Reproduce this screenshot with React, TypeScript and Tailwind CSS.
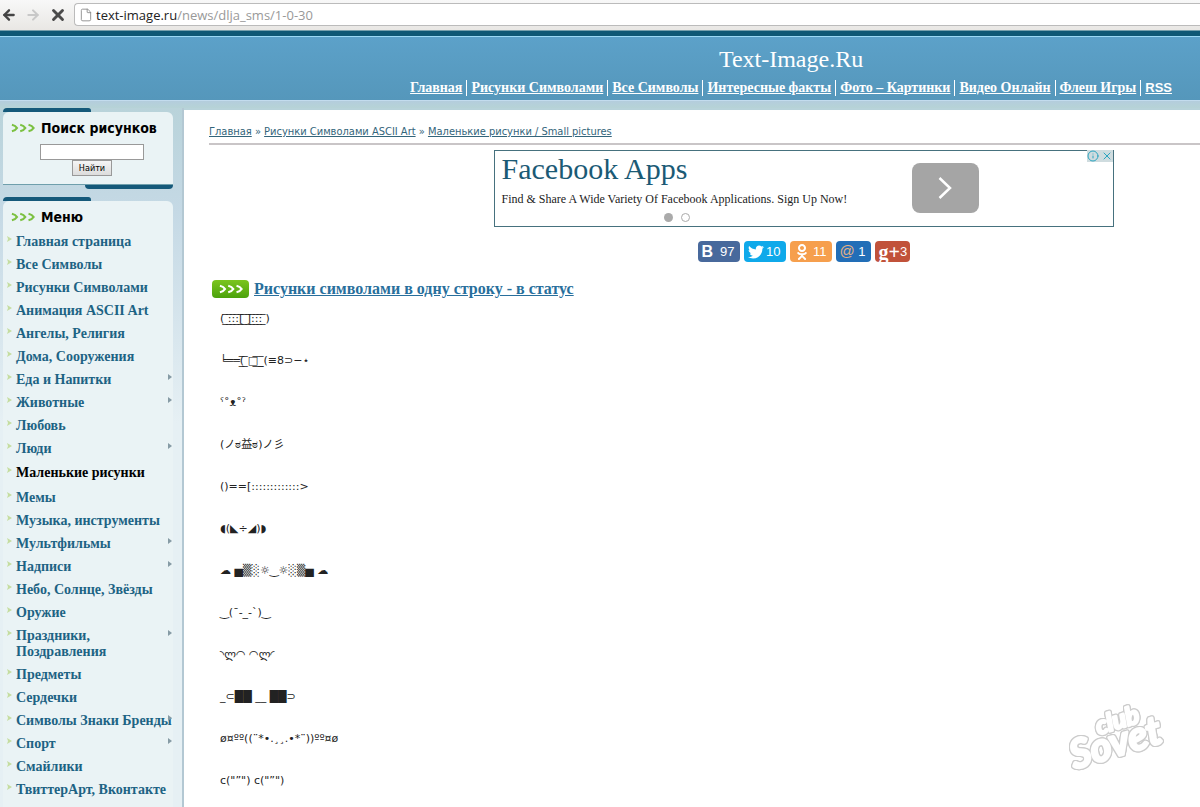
import { ArrowLeft, ArrowRight, File, Info, X } from "lucide-react";
import { FaOdnoklassniki, FaTwitter } from "react-icons/fa";

const SERIF = "font-['Liberation_Serif',serif]";

const topLinks = [
  "Главная",
  "Рисунки Символами",
  "Все Символы",
  "Интересные факты",
  "Фото – Картинки",
  "Видео Онлайн",
  "Флеш Игры",
];

type MenuItem = { label: string; sub?: boolean; current?: boolean };

const menu: MenuItem[] = [
  { label: "Главная страница" },
  { label: "Все Символы" },
  { label: "Рисунки Символами" },
  { label: "Анимация ASCII Art" },
  { label: "Ангелы, Религия" },
  { label: "Дома, Сооружения" },
  { label: "Еда и Напитки", sub: true },
  { label: "Животные", sub: true },
  { label: "Любовь" },
  { label: "Люди", sub: true },
  { label: "Маленькие рисунки", current: true },
  { label: "Мемы" },
  { label: "Музыка, инструменты" },
  { label: "Мультфильмы", sub: true },
  { label: "Надписи", sub: true },
  { label: "Небо, Солнце, Звёзды" },
  { label: "Оружие" },
  { label: "Праздники, Поздравления", sub: true },
  { label: "Предметы" },
  { label: "Сердечки" },
  { label: "Символы Знаки Бренды", sub: true },
  { label: "Спорт", sub: true },
  { label: "Смайлики" },
  { label: "ТвиттерАрт, Вконтакте" },
];

const pictures = [
  "( ̲̅:̲̅:̲̅:̲̅[̲̅ ̲̅]̲̅:̲̅:̲̅:̲̅ ̲̅)",
  "╘══(̲̅ ̲̅□̲̅_̲̅(≡8⊃−⋆",
  "ˁ˚ᴥ˚ˀ",
  "(ノಠ益ಠ)ノ彡",
  "()==[:::::::::::::>",
  "◖(◣÷◢)◗",
  "☁ ▅▒░☼‿☼░▒▅ ☁",
  "‿(¯-_-`)‿",
  "◝ლ◠ ◠ლ◜",
  "_⊂██ __ ██⊃",
  "ø¤ºº((¨*•.¸¸.•*¨))ºº¤ø",
  "c(\"”\") c(\"”\")",
];

function Chevrons({ className }: { className: string }) {
  return (
    <svg viewBox="0 0 26 10" className={className} fill="none" stroke="currentColor" strokeWidth="2.4" aria-hidden="true">
      <path d="M1 1.5 Q5 2.5 6.500 5 Q5 7.500 1 8.500M10 1.500 Q14 2.500 15.500 5 Q14 7.500 10 8.500M19 1.500 Q23 2.500 24.500 5 Q23 7.500 19 8.500" />
    </svg>
  );
}

function BrowserBar() {
  return (
    <div className="flex h-[30px] items-center bg-linear-to-b from-[#f8f8f8] to-[#e9e7e4] pb-1 pt-[3px]">
      <div className="flex w-[74px] shrink-0 items-center">
        <button type="button" aria-label="Назад" className="w-6 pl-px text-[#444]">
          <ArrowLeft size={16} strokeWidth={3.5} />
        </button>
        <button type="button" aria-label="Вперёд" className="w-6 pl-px text-[#c8c8c8]">
          <ArrowRight size={16} strokeWidth={3} />
        </button>
        <button type="button" aria-label="Остановить" className="pl-px text-[#4a4a4a]">
          <X size={18} strokeWidth={3.8} />
        </button>
      </div>
      <div className="flex h-[23px] flex-1 items-center gap-[3px] rounded-l-sm border border-r-0 border-[#bbb] bg-white pl-1 font-['Open_Sans',sans-serif] text-[13px] leading-5">
        <File size={14} strokeWidth={1.5} className="text-[#888]" />
        <span className="text-[#999]">
          <span className="text-[#222]">text-image.ru</span>/news/dlja_sms/1-0-30
        </span>
      </div>
    </div>
  );
}

function Header() {
  return (
    <header className={`flex h-[65px] justify-end border-y border-b-[#c3dcee] border-t-[#9cd9f5] bg-linear-to-b from-[#5ca1c9] to-[#5597bb] pr-7 text-white ${SERIF}`}>
      <div className="flex flex-col items-center pt-2">
        <h1 className="text-2xl leading-7">Text-Image.Ru</h1>
        <nav className="flex items-center gap-1 whitespace-nowrap pt-[5px] text-sm font-bold leading-5">
          {topLinks.map((label) => (
            <span key={label} className="flex items-center gap-1">
              <a href="#" className="underline">
                {label}
              </a>
              <span className="h-4 w-px bg-white" />
            </span>
          ))}
          <a href="#" className="font-['Liberation_Sans',sans-serif] text-[13px] underline">
            RSS
          </a>
        </nav>
      </div>
    </header>
  );
}

function PanelTitle({ children }: { children: string }) {
  return (
    <h2 className="flex items-center gap-1.5 pl-2 font-['DejaVu_Sans_Condensed','DejaVu_Sans',sans-serif] text-sm font-bold leading-5 text-black">
      <Chevrons className="h-2.5 w-6 text-[#7cc142]" />
      {children}
    </h2>
  );
}

function Sidebar() {
  return (
    <aside className="flex w-[184px] shrink-0 flex-col border-r-2 border-[#b3c8d3] bg-linear-to-b from-[#b9d3da] via-[#c5d9e5] via-15% to-[#e6f0f4] to-45% pl-[3px] pr-[9px]">
      <div className="h-1 w-[88px] rounded-tl-md rounded-tr-sm bg-[#15597a]" />
      <section className="h-[73px] rounded-t-md border-b border-[#6f9fac] bg-[#eaf3f5] pt-1.5">
        <PanelTitle>Поиск рисунков</PanelTitle>
        <form className="flex flex-col items-center pl-2 pt-1.5" onSubmit={(e) => e.preventDefault()}>
          <input type="text" aria-label="Поиск рисунков" className="h-4 w-[104px] border border-[#999] bg-white px-1 text-[10px]" />
          <button type="submit" className="h-4 border border-[#999] bg-linear-to-b from-[#f5f5f5] to-[#dcdcdc] px-1.5 font-['DejaVu_Sans_Condensed','DejaVu_Sans',sans-serif] text-[9px] leading-3 text-black">
            Найти
          </button>
        </form>
      </section>
      <div className="h-1 w-[88px] self-end rounded-b-md bg-[#15597a]" />
      <div className="mt-2 h-1 w-[88px] rounded-tl-md rounded-tr-sm bg-[#15597a]" />
      <section className="flex-1 rounded-t-md bg-[#eaf3f5] pt-1.5">
        <PanelTitle>Меню</PanelTitle>
        <ul className={`pt-[3px] text-sm font-bold leading-4 ${SERIF}`}>
          {menu.map((item) => (
            <li key={item.label} className={`flex items-start pl-1 ${item.current ? "py-[5px]" : "pb-[3px] pt-1"}`}>
              <svg viewBox="0 0 5 6" className="mt-0.5 h-1.5 w-[5px] shrink-0 fill-[#c5dda0]" aria-hidden="true">
                <path d="M0 0L5 3L0 6L1 3Z" />
              </svg>
              <a href="#" className={`ml-1 w-[152px] shrink-0 ${item.current ? "text-black" : "text-[#1d6384]"} ${item.label.startsWith("Праздники") ? "" : "whitespace-nowrap"}`}>
                {item.label}
              </a>
              {item.sub && (
                <svg viewBox="0 0 4 6" className="mt-0.5 h-1.5 w-1 shrink-0 fill-[#869ba5]" aria-hidden="true">
                  <path d="M0 0L4 3L0 6Z" />
                </svg>
              )}
            </li>
          ))}
        </ul>
      </section>
    </aside>
  );
}

function Advert() {
  return (
    <div className={`relative flex h-[77px] w-[620px] border border-[#46717e] pl-[7px] ${SERIF}`}>
      <div className="flex w-[350px] flex-col">
        <a href="#" className="text-3xl leading-9 text-[#1b5a75]">
          Facebook Apps
        </a>
        <p className="whitespace-nowrap pt-1 text-xs leading-4 text-[#222]">
          Find &amp; Share A Wide Variety Of Facebook Applications. Sign Up Now!
        </p>
        <div className="flex justify-center gap-2 pt-1.5">
          <span className="size-[9px] rounded-full bg-[#aaa]" />
          <span className="size-[9px] rounded-full border border-[#aaa]" />
        </div>
      </div>
      <button type="button" aria-label="Открыть" className="ml-[60px] mt-3 flex h-[50px] w-[67px] items-center justify-center rounded-lg bg-[#a5a5a5] text-white">
        <svg viewBox="0 0 14 22" className="h-[22px] w-3.5" fill="none" stroke="currentColor" strokeWidth="2.5" aria-hidden="true">
          <path d="M1.500 1L12 11L1.500 21" />
        </svg>
      </button>
      <div className="absolute -top-px right-0 flex gap-0.5 bg-[#cfdcdf] text-[#2ba5c0]">
        <Info size={12} />
        <X size={12} />
      </div>
    </div>
  );
}

function ShareButtons() {
  const base = "flex h-[21px] items-center justify-between rounded-sm pl-1 pr-[5px] text-[13px] text-white";
  return (
    <div className="flex gap-1 font-['Liberation_Sans',sans-serif]">
      <button type="button" className={`${base} w-[42px] bg-[#48699c]`}>
        <b className="text-base">B</b>97
      </button>
      <button type="button" className={`${base} w-[42px] bg-[#0fa9ea]`}>
        <FaTwitter size={16} />
        10
      </button>
      <button type="button" className={`${base} w-[42px] bg-[#f69f4d]`}>
        <FaOdnoklassniki size={16} />
        11
      </button>
      <button type="button" className={`${base} w-[35px] bg-[#226eb7]`}>
        <span className="text-[15px] text-[#e3b184]">@</span>1
      </button>
      <button type="button" className={`${base} w-[35px] bg-[#c1523a] pl-0`}>
        <span className="font-['Liberation_Serif',serif] text-xl font-bold leading-4">g+</span>3
      </button>
    </div>
  );
}

function Watermark() {
  return (
    <svg
      viewBox="0 0 110 80"
      className="pointer-events-none absolute bottom-[30px] right-[26px] h-20 w-[110px] overflow-visible fill-white stroke-white font-['Lato',sans-serif] font-bold italic [filter:drop-shadow(1px_0_0_#ccc)_drop-shadow(-1px_0_0_#ccc)_drop-shadow(0_1px_0_#ccc)_drop-shadow(0_-1px_0_#ccc)]"
      strokeWidth="2.5"
      strokeLinejoin="round"
      role="img"
      aria-label="club Sovet"
    >
      <g transform="rotate(-17 55 40)">
        <text x="36" y="32" fontSize="25">
          club
        </text>
        <text x="3" y="58" fontSize="40">
          Sovet
        </text>
      </g>
    </svg>
  );
}

export default function App() {
  return (
    <div className="relative flex min-h-screen flex-col overflow-hidden bg-white">
      <BrowserBar />
      <div className="h-1.5 border-t border-[#77a0ad] bg-[#0f5875]" />
      <Header />
      <div className="h-[7px] bg-linear-to-b from-[#b4cddd] to-[#b6d3d6]" />
      <div className="flex flex-1 bg-[#b8d3da]">
        <Sidebar />
        <main className="mt-0.5 min-w-0 flex-1 bg-white pl-[25px] pt-3.5 font-['DejaVu_Sans_Condensed','DejaVu_Sans',sans-serif] text-[11px]">
          <div className="leading-4 text-[#33657b]">
            <a href="#" className="underline">Главная</a> » <a href="#" className="underline">Рисунки Символами ASCII Art</a> »{" "}
            <a href="#" className="underline">Маленькие рисунки / Small pictures</a>
          </div>
          <hr className="mt-[3px] border-t-2 border-[#c9c5c7]" />
          <div className="flex flex-col items-center gap-3.5 pl-[198px] pt-[5px]">
            <Advert />
            <ShareButtons />
          </div>
          <h2 className={`flex items-center gap-[5px] pl-[3px] pt-[15px] text-base font-bold leading-6 text-[#286f9c] ${SERIF}`}>
            <span className="flex h-[18px] w-[37px] items-center justify-center rounded bg-linear-to-b from-[#7bc51e] to-[#4ba20c] text-white">
              <Chevrons className="h-2.5 w-6" />
            </span>
            <a href="#" className="underline">
              Рисунки символами в одну строку - в статус
            </a>
          </h2>
          <div className="flex flex-col gap-[26px] pl-[11px] pt-2.5 font-['DejaVu_Sans','Noto_Sans_CJK_JP',sans-serif] leading-4 text-[#222]">
            {pictures.map((picture) => (
              <p key={picture} className="h-4 whitespace-pre">
                {picture}
              </p>
            ))}
          </div>
        </main>
      </div>
      <Watermark />
    </div>
  );
}
